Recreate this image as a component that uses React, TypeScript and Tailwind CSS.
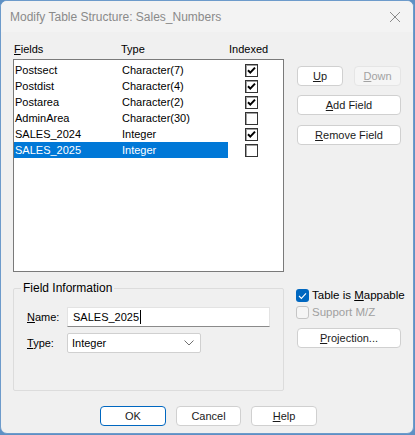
import React from "react";

const rows = [
  { name: "Postsect", type: "Character(7)", indexed: true },
  { name: "Postdist", type: "Character(4)", indexed: true },
  { name: "Postarea", type: "Character(2)", indexed: true },
  { name: "AdminArea", type: "Character(30)", indexed: false },
  { name: "SALES_2024", type: "Integer", indexed: true },
  { name: "SALES_2025", type: "Integer", indexed: false, selected: true },
];

function ClassicCheck({ checked }: { checked: boolean }) {
  return (
    <span className="flex h-[13px] w-[13px] items-center justify-center border border-[#333] bg-white shadow-[inset_1px_1px_0_#a0a0a0]">
      {checked && (
        <svg width="9" height="9" viewBox="0 0 9 9">
          <path d="M1 4.2 L3.3 6.6 L8 1.6" fill="none" stroke="#000" strokeWidth="2" />
        </svg>
      )}
    </span>
  );
}

function Btn({
  children,
  className = "",
  disabled = false,
  primary = false,
}: {
  children: React.ReactNode;
  className?: string;
  disabled?: boolean;
  primary?: boolean;
}) {
  return (
    <button
      className={`flex h-[20px] items-center justify-center rounded-[4px] border text-[11px] leading-none ${
        disabled
          ? "border-[#e5e5e5] bg-[#f5f5f5] text-[#a2a2a2]"
          : primary
          ? "border-[#0067c0] bg-white text-[#1a1a1a]"
          : "border-[#d0d0d0] bg-white text-[#1a1a1a]"
      } ${className}`}
    >
      {children}
    </button>
  );
}

export default function App() {
  return (
    <div
      className="h-[435px] w-[415px] bg-[#5e90c4]"
      style={{ fontFamily: '"Liberation Sans", Arial, sans-serif' }}
    >
      <div className="flex h-[434px] w-[414px] flex-col overflow-hidden rounded-[7px] border border-[#6d9bcb] bg-[#f0f0f0] text-[11px] text-[#000]">
        {/* title bar */}
        <div className="flex h-[31px] shrink-0 items-center justify-between bg-[#f3f3f3] pl-[9px] pr-[12px]">
          <span className="text-[12px] text-[#8a8a8a]">Modify Table Structure: Sales_Numbers</span>
          <svg width="12" height="12" viewBox="0 0 12 12">
            <path d="M1 1 L11 11 M11 1 L1 11" stroke="#8a8a8a" strokeWidth="1" />
          </svg>
        </div>

        {/* fields + buttons */}
        <div className="flex pl-[12px]">
          <div className="flex w-[271px] flex-col">
            <div className="mt-[10px] flex h-[14px] items-center leading-[14px]">
              <span className="w-[108px] pl-[1px]">
                <u>F</u>ields
              </span>
              <span className="w-[108px]">Type</span>
              <span>Indexed</span>
            </div>
            <div className="mt-[3px] h-[213px] border border-[#7a7a7a] bg-white pt-[2px]">
              {rows.map((r) => (
                <div key={r.name} className="flex h-[16px] items-center">
                  <div
                    className={`flex h-[16px] w-[214px] items-center ${
                      r.selected ? "bg-[#0078d7] text-white" : ""
                    }`}
                  >
                    <span className="w-[108px] pl-[1px]">{r.name}</span>
                    <span>{r.type}</span>
                  </div>
                  <span className="ml-[17px]">
                    <ClassicCheck checked={r.indexed} />
                  </span>
                </div>
              ))}
            </div>
          </div>

          <div className="ml-[13px] mt-[34px] flex w-[104px] flex-col">
            <div className="flex gap-[11px]">
              <Btn className="w-[46px]">
                <u>U</u>p
              </Btn>
              <Btn className="w-[47px]" disabled>
                <u>D</u>own
              </Btn>
            </div>
            <Btn className="mt-[9px] w-[104px]">
              <u>A</u>dd Field
            </Btn>
            <Btn className="mt-[10px] w-[104px]">
              <u>R</u>emove Field
            </Btn>
          </div>
        </div>

        {/* field information + options */}
        <div className="mt-[9px] flex pl-[12px]">
          <fieldset className="h-[110px] w-[271px] rounded-[2px] border border-[#dcdcdc] px-[13px]">
            <legend className="ml-[-6px] px-[2px] text-[12px] leading-[14px]">Field Information</legend>
            <div className="mt-[12px] flex items-center">
              <span className="w-[40px]">
                <u>N</u>ame:
              </span>
              <div className="flex h-[20px] w-[203px] items-center border border-[#e3e3e3] border-b-[#8a8a8a] bg-white pl-[5px] text-[11px]">
                SALES_2025
                <span className="ml-[1px] h-[14px] w-[1px] bg-black" />
              </div>
            </div>
            <div className="mt-[6px] flex items-center">
              <span className="w-[40px]">
                <u>T</u>ype:
              </span>
              <div className="flex h-[20px] w-[134px] items-center justify-between rounded-[2px] border border-[#d0d0d0] bg-white pl-[4px] pr-[6px] text-[11px]">
                Integer
                <svg width="10" height="6" viewBox="0 0 10 6">
                  <path d="M0.5 0.5 L5 5 L9.5 0.5" fill="none" stroke="#707070" strokeWidth="1" />
                </svg>
              </div>
            </div>
          </fieldset>

          <div className="ml-[12px] mt-[8px] flex flex-col">
            <div className="flex h-[13px] items-center leading-none">
              <span className="flex h-[13px] w-[13px] items-center justify-center rounded-[3px] bg-[#0067c0]">
                <svg width="9" height="8" viewBox="0 0 9 8">
                  <path d="M1 4 L3.4 6.4 L8 1.4" fill="none" stroke="#fff" strokeWidth="1.1" />
                </svg>
              </span>
              <span className="ml-[3px] text-[11.5px]">
                Table is <u>M</u>appable
              </span>
            </div>
            <div className="mt-[4px] flex h-[13px] items-center leading-none">
              <span className="h-[13px] w-[13px] rounded-[3px] border border-[#c5c5c5] bg-[#f5f5f5]" />
              <span className="ml-[3px] text-[11.5px] text-[#a0a0a0]">Support M/Z</span>
            </div>
            <Btn className="ml-[1px] mt-[9px] w-[104px]">
              <u>P</u>rojection...
            </Btn>
          </div>
        </div>

        {/* dialog buttons */}
        <div className="mt-[15px] flex gap-[10px] pl-[99px]">
          <Btn className="w-[66px]" primary>
            OK
          </Btn>
          <Btn className="w-[65px]">Cancel</Btn>
          <Btn className="w-[66px]">
            <u>H</u>elp
          </Btn>
        </div>
      </div>
    </div>
  );
}
